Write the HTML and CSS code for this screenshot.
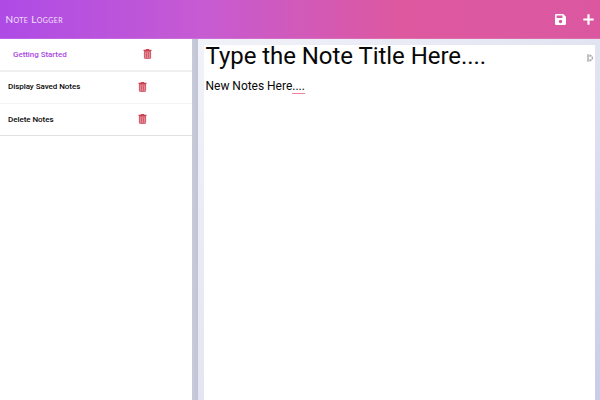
FILE: index.html
```html
<!DOCTYPE html>
<html lang="en">
<head>
<meta charset="utf-8">
<title>Note Logger</title>
<link rel="stylesheet" href="styles.css">
</head>
<body>
<svg class="symbols" aria-hidden="true">
  <symbol id="trash" viewBox="0 0 8 10">
    <path fill="#cc4454" d="M2.6 0h2.8l.5.8H8v1.1H0V.8h2.1z"/>
    <path fill="#e08d97" d="M.5 2.3h7v6.5q0 1-1 1h-5q-1 0-1-1z"/>
    <path fill="none" stroke="#d05563" stroke-width=".9" d="M.9 2.4v6q0 1 .9 1h4.4q.9 0 .9-1v-6M.5 2.6h7M3 3.5v5M5 3.5v5"/>
  </symbol>
</svg>
<header class="header">
  <h1 class="brand">Note Logger</h1>
  <div class="actions">
    <svg class="save" viewBox="0 0 11 11"><path fill="#fff" fill-rule="evenodd" d="M1.2 0h7.1L11 2.7v7.1Q11 11 9.8 11H1.2Q0 11 0 9.8V1.2Q0 0 1.2 0zM1.6 1.6v2.4h5.8V1.6zM5.5 5.8a1.7 1.7 0 1 0 0 3.4 1.7 1.7 0 1 0 0-3.4z"/></svg>
    <svg class="add" viewBox="0 0 11 11"><path stroke="#fff" stroke-width="2.2" d="M5.5.3v10.4M.3 5.5h10.4"/></svg>
  </div>
</header>
<main class="layout">
  <ul class="notes">
    <li class="note active"><span class="name">Getting Started</span><svg class="trash"><use href="#trash"/></svg></li>
    <li class="note"><span class="name">Display Saved Notes</span><svg class="trash"><use href="#trash"/></svg></li>
    <li class="note last"><span class="name">Delete Notes</span><svg class="trash"><use href="#trash"/></svg></li>
  </ul>
  <div class="divider"></div>
  <section class="editor">
    <div class="page">
      <div class="title-row">
        <h2 class="title">Type the Note Title Here....</h2>
        <svg class="marker" viewBox="0 0 6 8"><path fill="none" stroke="#777" stroke-width=".9" d="M1 .2v7.6M3 .7v2M3 5.3v2M3.6 1.8h1M5.2 2.6v2.8M3.6 6.2h1"/></svg>
      </div>
      <p class="text">New Notes Here<span class="spell">....</span></p>
    </div>
  </section>
</main>
</body>
</html>
```
FILE: styles.css
```css
* { box-sizing: border-box; }
body {
  margin: 0;
  height: 100vh;
  display: flex;
  flex-direction: column;
  overflow: hidden;
  background: #fff;
  font-family: Roboto, "Liberation Sans", sans-serif;
  color: #080808;
}
.symbols { display: none; }
.header {
  height: 39px;
  flex: none;
  display: flex;
  align-items: center;
  justify-content: space-between;
  padding: 0 6px 0 5.5px;
  background: linear-gradient(90deg, #ae4be6 0%, #c65bd2 34%, #dd589f 67%, #db58a1 100%);
  border-bottom: 1px solid rgba(255, 255, 255, .12);
}
.brand {
  margin: 0;
  font: 400 10px/14px Lato, sans-serif;
  font-variant: small-caps;
  letter-spacing: .4px;
  color: #f3e3fb;
}
.actions { display: flex; gap: 17px; }
.save, .add { width: 11px; height: 11px; }
.layout { flex: 1; display: flex; min-height: 0; }
.notes { width: 192px; margin: 0; padding: 0; list-style: none; }
.note {
  height: 32px;
  display: flex;
  align-items: center;
  padding: 0 0 1px 8px;
  border-bottom: 1px solid #f4f4f4;
  font-size: 8px;
  font-weight: 500;
  letter-spacing: -.05px;
}
.active { height: 33px; padding: 0 0 0 13px; border-bottom: 2px solid #f0f0f0; color: #ab47e2; }
.last { padding-bottom: 0; border-bottom-color: #e2e2e2; }
.name { width: 130px; line-height: 10px; }
.trash { width: 9px; height: 10px; margin-bottom: 1px; }
.divider { width: 6px; background: linear-gradient(90deg, #c9cbd9, #c0c4d6); }
.editor {
  flex: 1;
  display: flex;
  padding: 6px 5px 0 6px;
  background: linear-gradient(135deg, #f2f2f9 0%, #dfe2f0 60%, #c8cde8 100%);
}
.page { flex: 1; padding-left: 1.5px; background: #fff; }
.title-row { display: flex; justify-content: space-between; height: 25px; padding-right: 2px; }
.title { margin: -3px 0 0; font-size: 24px; line-height: 28px; font-weight: 400; letter-spacing: -.05px; }
.marker { width: 6px; height: 8px; margin-top: 9px; }
.text { margin: 9px 0 0; font-size: 12px; line-height: 15px; letter-spacing: -.02px; }
.spell { border-bottom: 1.5px solid #f47f9d; }
```
